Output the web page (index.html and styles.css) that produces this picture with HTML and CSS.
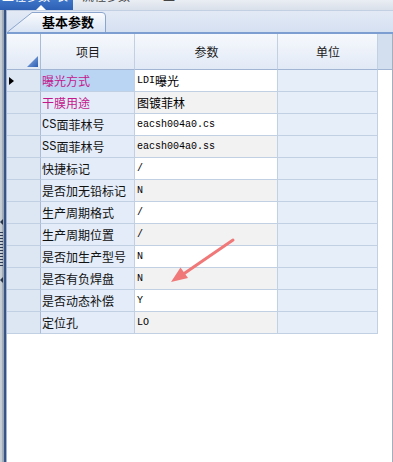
FILE: index.html
```html
<!DOCTYPE html>
<html>
<head>
  <meta charset="UTF-8" />
  <title>基本参数</title>
  <link rel="stylesheet" href="styles.css">
</head>
<body>
<div class="topbar">
  <div class="toptab active"><span>工程参数</span><i class="caret"></i><span class="tail">表</span></div>
  <div class="toptab second"><span>流程参数</span></div>
  <div class="toptab third"><span>工</span></div>
</div>
<div class="main">
  <div class="splitter">
    <i class="grip-arrow a1"></i>
    <i class="grip-dots"></i>
    <i class="grip-arrow a2"></i>
  </div>
  <div class="panel">
    <div class="tabband">
      <div class="tab">
        <svg width="100" height="20" viewBox="0 0 100 20">
          <defs>
            <linearGradient id="tabfill" x1="0" y1="0" x2="0" y2="1">
              <stop offset="0" stop-color="#fbfcfe"/>
              <stop offset="1" stop-color="#d9e4f4"/>
            </linearGradient>
          </defs>
          <path d="M0.5 20 L25 0.5 L95 0.5 Q98.5 0.5 98.5 4 L98.5 20" fill="url(#tabfill)" stroke="#8ba5cc"/>
        </svg>
        <span>基本参数</span>
      </div>
    </div>
    <div class="grid">
      <div class="row head">
        <div class="rh corner">
          <svg width="11" height="11" viewBox="0 0 11 11">
            <defs>
              <linearGradient id="cornerfill" x1="1" y1="1" x2="0" y2="0">
                <stop offset="0" stop-color="#2a5cb3"/>
                <stop offset="1" stop-color="#9bbbe8"/>
              </linearGradient>
            </defs>
            <path d="M11 0 L11 11 L0 11 Z" fill="url(#cornerfill)"/>
          </svg>
        </div>
        <div>项目</div>
        <div>参数</div>
        <div>单位</div>
        <div class="fill"></div>
      </div>
      <div class="row">
        <div class="rh"><svg width="5" height="8" viewBox="0 0 5 8"><path d="M0 0 L5 4 L0 8 Z" fill="#000"/></svg></div>
        <div class="name sel hot">曝光方式</div>
        <div class="val"><span class="mono">LDI</span>曝光</div>
        <div class="unit"></div>
        <div class="fill"></div>
      </div>
      <div class="row">
        <div class="rh"></div>
        <div class="name hot">干膜用途</div>
        <div class="val alt">图镀菲林</div>
        <div class="unit"></div>
        <div class="fill"></div>
      </div>
      <div class="row">
        <div class="rh"></div>
        <div class="name"><span class="mono big">CS</span>面菲林号</div>
        <div class="val mono">eacsh004a0.cs</div>
        <div class="unit"></div>
        <div class="fill"></div>
      </div>
      <div class="row">
        <div class="rh"></div>
        <div class="name"><span class="mono big">SS</span>面菲林号</div>
        <div class="val alt mono">eacsh004a0.ss</div>
        <div class="unit"></div>
        <div class="fill"></div>
      </div>
      <div class="row">
        <div class="rh"></div>
        <div class="name">快捷标记</div>
        <div class="val mono">/</div>
        <div class="unit"></div>
        <div class="fill"></div>
      </div>
      <div class="row">
        <div class="rh"></div>
        <div class="name">是否加无铅标记</div>
        <div class="val alt mono">N</div>
        <div class="unit"></div>
        <div class="fill"></div>
      </div>
      <div class="row">
        <div class="rh"></div>
        <div class="name">生产周期格式</div>
        <div class="val mono">/</div>
        <div class="unit"></div>
        <div class="fill"></div>
      </div>
      <div class="row">
        <div class="rh"></div>
        <div class="name">生产周期位置</div>
        <div class="val alt mono">/</div>
        <div class="unit"></div>
        <div class="fill"></div>
      </div>
      <div class="row">
        <div class="rh"></div>
        <div class="name">是否加生产型号</div>
        <div class="val mono">N</div>
        <div class="unit"></div>
        <div class="fill"></div>
      </div>
      <div class="row">
        <div class="rh"></div>
        <div class="name">是否有负焊盘</div>
        <div class="val alt mono">N</div>
        <div class="unit"></div>
        <div class="fill"></div>
      </div>
      <div class="row">
        <div class="rh"></div>
        <div class="name">是否动态补偿</div>
        <div class="val mono">Y</div>
        <div class="unit"></div>
        <div class="fill"></div>
      </div>
      <div class="row">
        <div class="rh"></div>
        <div class="name">定位孔</div>
        <div class="val alt mono">LO</div>
        <div class="unit"></div>
        <div class="fill"></div>
      </div>
    </div>
  </div>
</div>
<!-- red annotation arrow drawn over the grid -->
<svg class="arrow" width="393" height="462" viewBox="0 0 393 462">
  <line x1="233" y1="240" x2="182" y2="275" stroke="#f07878" stroke-width="3" stroke-linecap="round"/>
  <path d="M171 282 L180.5 267.5 L188 278 Z" fill="#f07878"/>
</svg>
</body>
</html>
```

FILE: styles.css
```css
* {
  box-sizing: border-box;
}

body {
  margin: 0;
  width: 393px;
  height: 462px;
  overflow: hidden;
  background: #fff;
  font-family: "Noto Sans CJK SC", "DejaVu Sans", sans-serif;
  font-size: 12px;
  color: #111;
}

/* top tab strip, cut off by the screenshot */
.topbar {
  display: flex;
  height: 10px;
  overflow: hidden;
  background: linear-gradient(#eaeef4, #d9e0ea);
}
.toptab {
  position: relative;
  display: flex;
  height: 10px;
  overflow: hidden;
}
.toptab span {
  display: block;
  margin-top: -10px;
  font-size: 12px;
  line-height: 12px;
  white-space: nowrap;
  color: #444;
}
.toptab.active {
  width: 73px;
  padding-left: 2px;
  background: linear-gradient(#3e75c9, #2d60b4);
}
.toptab.active span {
  color: #fff;
}
.toptab.active .tail {
  margin-left: 6px;
}
.toptab.second {
  margin-left: 9px;
}
.toptab.third {
  margin-left: 33px;
}
.caret {
  position: absolute;
  left: 36px;
  bottom: 0;
  width: 0;
  height: 0;
  border-left: 5px solid transparent;
  border-right: 5px solid transparent;
  border-bottom: 5px solid #fff;
}

.main {
  display: flex;
  height: 452px;
}

/* left splitter */
.splitter {
  position: relative;
  flex: none;
  width: 7px;
  background: linear-gradient(to right, #cdd2d9 0, #c3c9d1 2px, #a8b2bf 2px, #98a4b3 4px, #3d5889 4px, #34507f 6px, #9fb3d2 6px);
}
.grip-arrow {
  position: absolute;
  left: 0;
  width: 0;
  height: 0;
  border-top: 3px solid transparent;
  border-bottom: 3px solid transparent;
  border-right: 3px solid #27344e;
}
.grip-arrow.a1 {
  top: 209px;
}
.grip-arrow.a2 {
  top: 267px;
}
.grip-dots {
  position: absolute;
  left: 0;
  top: 222px;
  width: 3px;
  height: 35px;
  background: repeating-linear-gradient(to bottom, #2c3a57 0, #2c3a57 1px, transparent 1px, transparent 3px);
}

.panel {
  flex: 1;
  display: flex;
  flex-direction: column;
}

/* tab band */
.tabband {
  display: flex;
  align-items: flex-end;
  height: 24px;
  border-top: 1px solid #c3d0e3;
  border-bottom: 2px solid #7d9ed1;
  background: linear-gradient(#e3eaf6, #d5e0f1);
}
.tab {
  position: relative;
  width: 100px;
  height: 20px;
  padding-left: 35px;
  font-size: 13px;
  font-weight: bold;
  line-height: 20px;
  color: #000;
}
.tab svg {
  position: absolute;
  left: 0;
  top: 0;
}
.tab span {
  position: relative;
}

/* grid */
.grid {
  flex: 1;
  background: #fff;
  border-right: 1px solid #a4aebc;
}
.row {
  display: grid;
  grid-template-columns: 34px 94px 143px 100px 14px;
  height: 22px;
}
.row > div {
  display: flex;
  align-items: center;
  padding-left: 1px;
  overflow: hidden;
  white-space: nowrap;
  border-right: 1px solid #c2d0e3;
  border-bottom: 1px solid #c2d0e3;
}
.row > .fill {
  border: none;
}

.head {
  height: 36px;
  background: linear-gradient(#f6f9fd, #e1e9f6);
}
.head > div {
  justify-content: center;
  color: #1a1a1a;
  border-bottom-color: #a2b6d4;
}
.head > .fill {
  background: #d3deef;
  border-bottom: 1px solid #a2b6d4;
}
.head > .corner {
  justify-content: flex-end;
  align-items: flex-end;
  padding: 0 2px 2px 0;
  background: linear-gradient(#f6f9fd, #e1e9f6);
}

.rh {
  background: #dde7f4;
  border-right-color: #a9bbd6 !important;
}
.row > .rh {
  padding-left: 2px;
}
.name {
  background: #e3ecf8;
}
.name.sel {
  background: #bad4f4;
}
.hot {
  color: #c2188c;
}
.row > .val {
  padding-left: 2px;
  background: #fff;
  color: #000;
}
.row > .val.alt {
  background: #f2f2f2;
}
.unit {
  background: #e6eef9;
}

.mono {
  font-family: "Liberation Mono", monospace;
  font-size: 10px;
  color: #000;
}
.mono.big {
  font-size: 12px;
  color: inherit;
}

.arrow {
  position: absolute;
  left: 0;
  top: 0;
  pointer-events: none;
}
```
